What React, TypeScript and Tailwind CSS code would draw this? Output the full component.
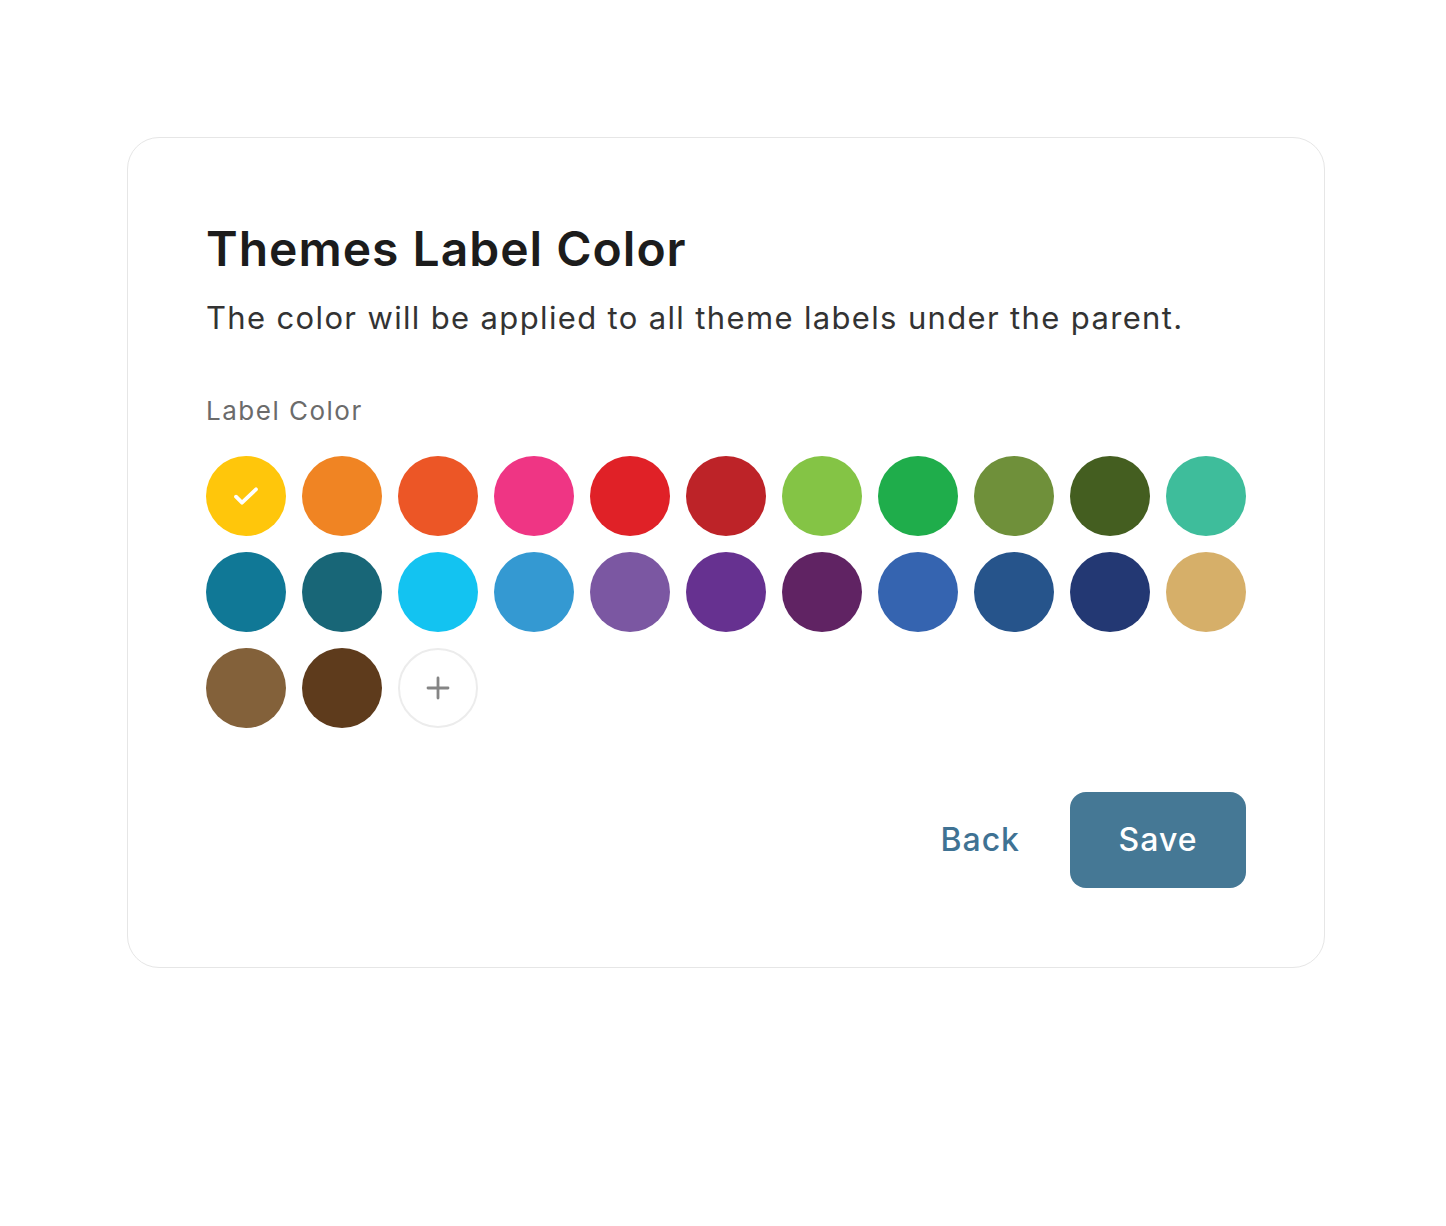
import React, { useState } from 'react';

const colors = [
  '#FFC60B', '#F08423', '#EC5626', '#EF3584', '#E02127', '#BD2328', '#84C445', '#1FAD4B', '#6F903A', '#445E20', '#3EBD9B',
  '#107896', '#186677', '#13C3F1', '#3499D2', '#7B57A2', '#663190', '#602363', '#3564B0', '#26548B', '#233873', '#D6AF69',
  '#83613A', '#5E3B1C',
];

const App: React.FC = () => {
  const [selected, setSelected] = useState(0);

  return (
    <div className="min-h-[1226px] w-full bg-white pt-[137px] pl-[127px] font-['Inter',sans-serif]">
      <div className="w-[1198px] rounded-[32px] border border-[#e6e6e6] bg-white pl-[78px] pr-[78px] pt-[82px] pb-[79px]">
        <h1 className="text-[48px] font-semibold leading-[58px] tracking-[1px] text-[#1c1c1c]">Themes Label Color</h1>
        <p className="mt-[20px] text-[31px] leading-[40px] tracking-[1.35px] text-[#333333]">
          The color will be applied to all theme labels under the parent.
        </p>
        <div className="mt-[57px] text-[26px] leading-[32px] tracking-[1.5px] text-[#6b6b6b]">Label Color</div>
        <div className="mt-[29px] grid grid-cols-[repeat(11,80px)] gap-4">
          {colors.map((c, i) => (
            <button
              key={c}
              onClick={() => setSelected(i)}
              className="flex h-20 w-20 items-center justify-center rounded-full"
              style={{ backgroundColor: c }}
            >
              {selected === i && (
                <svg width="32" height="32" viewBox="0 0 24 24" fill="none" stroke="white" strokeWidth={2.8} strokeLinecap="round" strokeLinejoin="round">
                  <path d="M4.5 12.5l4.5 4.5L19.5 7" />
                </svg>
              )}
            </button>
          ))}
          <button className="flex h-20 w-20 items-center justify-center rounded-full border-2 border-[#ececec] bg-white">
            <svg width="24" height="24" viewBox="0 0 24 24" fill="none" stroke="#858585" strokeWidth={2.8} strokeLinecap="round">
              <path d="M12 2v20M2 12h20" />
            </svg>
          </button>
        </div>
        <div className="mt-16 flex items-center justify-end gap-[50px]">
          <button className="text-[32px] font-medium tracking-[1px] text-[#3f7293]">Back</button>
          <button className="h-24 w-[176px] rounded-2xl bg-[#457895] text-[32px] font-medium tracking-[1px] text-white">Save</button>
        </div>
      </div>
    </div>
  );
};

export default App;
